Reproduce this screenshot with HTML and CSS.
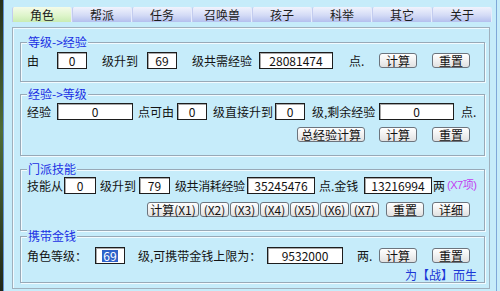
FILE: index.html
```html
<!DOCTYPE html>
<html lang="zh-CN">
<head>
<meta charset="utf-8">
<title>角色</title>
<link rel="stylesheet" href="styles.css">
</head>
<body>
<div class="win">
  <div class="app">
    <div class="tabs">
      <div class="tab active">角色</div>
      <div class="tab">帮派</div>
      <div class="tab">任务</div>
      <div class="tab">召唤兽</div>
      <div class="tab">孩子</div>
      <div class="tab">科举</div>
      <div class="tab">其它</div>
      <div class="tab">关于</div>
    </div>
    <div class="panel">
      <fieldset class="grp g1">
        <legend>等级-&gt;经验</legend>
        <div class="row">
          <span class="t w30">由</span>
          <span class="inp w30">0</span>
          <span class="t ml15 w45">级升到</span>
          <span class="inp w30">69</span>
          <span class="t ml15 w67">级共需经验</span>
          <span class="inp w74">28081474</span>
          <span class="t ml16 w30">点.</span>
          <button class="btn">计算</button>
          <button class="btn ml15">重置</button>
        </div>
      </fieldset>

      <fieldset class="grp g2">
        <legend>经验-&gt;等级</legend>
        <div class="row">
          <span class="t w30">经验</span>
          <span class="inp w76">0</span>
          <span class="t ml5 w39">点可由</span>
          <span class="inp w30">0</span>
          <span class="t ml6 w62">级直接升到</span>
          <span class="inp w30">0</span>
          <span class="t ml7 w67">级,剩余经验</span>
          <span class="inp w75">0</span>
          <span class="t ml7">点.</span>
        </div>
        <div class="row brow">
          <button class="btn big ml270">总经验计算</button>
          <button class="btn ml14">计算</button>
          <button class="btn ml15">重置</button>
        </div>
      </fieldset>

      <fieldset class="grp g3">
        <legend>门派技能</legend>
        <div class="row">
          <span class="t w37">技能从</span>
          <span class="inp w32">0</span>
          <span class="t ml4 w39">级升到</span>
          <span class="inp w31">79</span>
          <span class="t ml5 w72 tight">级共消耗经验</span>
          <span class="inp w68">35245476</span>
          <span class="t ml4 w45">点.金钱</span>
          <span class="inp w68">13216994</span>
          <span class="t ml1">两</span>
          <span class="note">(X7项)</span>
        </div>
        <div class="row brow">
          <button class="btn x1 ml120">计算(X1)</button>
          <button class="btn x ml1">(X2)</button>
          <button class="btn x ml1">(X3)</button>
          <button class="btn x ml1">(X4)</button>
          <button class="btn x ml1">(X5)</button>
          <button class="btn x ml1">(X6)</button>
          <button class="btn x ml1">(X7)</button>
          <button class="btn ml7">重置</button>
          <button class="btn ml8">详细</button>
        </div>
      </fieldset>

      <fieldset class="grp g4">
        <legend>携带金钱</legend>
        <div class="row">
          <span class="t w68">角色等级：</span>
          <span class="inp w30"><span class="sel">69</span></span>
          <span class="t ml13 w129">级,可携带金钱上限为：</span>
          <span class="inp w76">9532000</span>
          <span class="t ml14 w22">两.</span>
          <button class="btn">计算</button>
          <button class="btn ml15">重置</button>
        </div>
        <div class="motto">为【战】而生</div>
      </fieldset>
    </div>
  </div>
</div>
</body>
</html>
```

FILE: styles.css
```css
* { box-sizing: border-box; }

html, body {
  margin: 0;
  padding: 0;
}

body {
  width: 500px;
  height: 291px;
  overflow: hidden;
  background: #c6ecfa;
  font-family: "Noto Sans CJK SC", "Noto Sans", sans-serif;
  font-size: 12px;
  color: #141414;
}

.win {
  display: flex;
  height: 291px;
  border-left: 3px solid #33402a;
  border-image: linear-gradient(#26301c, #4f6d36 45%, #3b4f2a 70%, #1f2618) 1;
}

.app {
  width: 494px;
  height: 291px;
  padding-top: 7px;
  border-left: 1px solid #5d8fd2;
  border-right: 1px solid #7fa8d8;
}

/* tabs */
.tabs {
  display: flex;
  margin-left: 8px;
  height: 15px;
}

.tab {
  width: 60px;
  height: 15px;
  line-height: 15px;
  text-align: center;
  background: linear-gradient(#f1f3fd, #d4dbf6 55%, #b4c0ee);
  border-right: 1px solid #e6ebfb;
  border-left: 1px solid #c3ccef;
  border-radius: 2px 2px 0 0;
  color: #1c1c1c;
}

.tab.active {
  background: linear-gradient(#f4fbe9, #dff5cc 55%, #c9ecb2);
}

/* main panel */
.panel {
  margin: 5px 0 0 8px;
  width: 478px;
  padding: 8px 0 5px 7px;
  border: 1px solid #9fb0bd;
  box-shadow: inset 1px 1px 0 #f0faff;
}

.grp {
  margin: 0;
  width: 465px;
  min-width: 0;
  padding: 0 0 0 6px;
  border: 1px solid #98a9b7;
  box-shadow: inset 1px 1px 0 #f2fbff, 1px 1px 0 #f2fbff;
}

.grp legend {
  padding: 0 1px;
  font-size: 12px;
  line-height: 12px;
  color: #1b30e4;
  background: #c6ecfa;
}

.g1 { padding-top: 4px; padding-bottom: 12px; }
.g2 { margin-top: 6px; padding-top: 3px; padding-bottom: 13px; }
.g3 { margin-top: 7px; padding-top: 2px; padding-bottom: 13px; }
.g4 { margin-top: -1px; padding-top: 5px; padding-bottom: 1px; }

/* rows */
.row {
  display: flex;
  align-items: center;
  height: 17px;
  white-space: nowrap;
}

.row > * { flex: none; }

.brow {
  height: 15px;
}

.g2 .brow { margin-top: 7px; }
.g3 .brow { margin-top: 8px; }

.t {
  line-height: 17px;
}

.tight {
  letter-spacing: -0.4px;
}

.inp {
  display: inline-block;
  height: 17px;
  line-height: 15px;
  text-align: center;
  background: #fff;
  border: 1px solid #1d1d1d;
  box-shadow: inset 1px 1px 0 #a8a8a8;
  color: #111;
}

.sel {
  display: inline-block;
  padding: 0 1px;
  line-height: 12px;
  background: #2f62c9;
  color: #fff;
}

.btn {
  width: 38px;
  height: 15px;
  padding: 0;
  margin: 0;
  font-family: inherit;
  font-size: 12px;
  line-height: 13px;
  color: #111;
  text-align: center;
  border: 1px solid #6c747d;
  border-radius: 3px;
  background: linear-gradient(#ffffff, #f1f1f1 50%, #e1e1e1);
}

.btn.big { width: 68px; }
.btn.x1 { width: 52px; }
.btn.x { width: 29px; }

.note {
  margin-left: 2px;
  font-family: "Liberation Sans", "Noto Sans CJK SC", sans-serif;
  font-size: 11px;
  letter-spacing: -0.5px;
  color: #c23ef0;
  line-height: 17px;
}

.motto {
  margin: 4px 7px 0 0;
  text-align: right;
  line-height: 13px;
  color: #1a36d6;
}

/* widths */
.w22 { width: 22px; }
.w30 { width: 30px; }
.w31 { width: 31px; }
.w32 { width: 32px; }
.w37 { width: 37px; }
.w39 { width: 39px; }
.w45 { width: 45px; }
.w62 { width: 62px; }
.w67 { width: 67px; }
.w68 { width: 68px; }
.w72 { width: 72px; }
.w74 { width: 74px; }
.w75 { width: 75px; }
.w76 { width: 76px; }
.w129 { width: 129px; }

/* spacing */
.ml1 { margin-left: 1px; }
.ml4 { margin-left: 4px; }
.ml5 { margin-left: 5px; }
.ml6 { margin-left: 6px; }
.ml7 { margin-left: 7px; }
.ml8 { margin-left: 8px; }
.ml13 { margin-left: 13px; }
.ml14 { margin-left: 14px; }
.ml15 { margin-left: 15px; }
.ml16 { margin-left: 16px; }
.ml120 { margin-left: 120px; }
.ml270 { margin-left: 270px; }
```
